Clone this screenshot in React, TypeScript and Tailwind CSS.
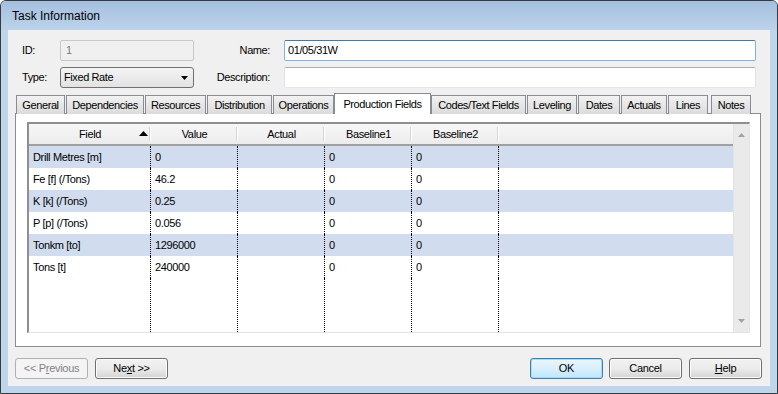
const ui = { fontFamily: '"Liberation Sans", Arial, sans-serif' };

const tabs = [
  { label: 'General', w: 'w-[49px]' },
  { label: 'Dependencies', w: 'w-[78px]' },
  { label: 'Resources', w: 'w-[61px]' },
  { label: 'Distribution', w: 'w-[65px]' },
  { label: 'Operations', w: 'w-[61px]' },
  { label: 'Production Fields', w: 'w-[97px]', active: true },
  { label: 'Codes/Text Fields', w: 'w-[95px]' },
  { label: 'Leveling', w: 'w-[50px]' },
  { label: 'Dates', w: 'w-[42px]' },
  { label: 'Actuals', w: 'w-[46px]' },
  { label: 'Lines', w: 'w-[40px]' },
  { label: 'Notes', w: 'w-[40px] ml-[2px]' },
];

const rows = [
  ['Drill Metres [m]', '0', '', '0', '0'],
  ['Fe [f] (/Tons)', '46.2', '', '0', '0'],
  ['K [k] (/Tons)', '0.25', '', '0', '0'],
  ['P [p] (/Tons)', '0.056', '', '0', '0'],
  ['Tonkm [to]', '1296000', '', '0', '0'],
  ['Tons [t]', '240000', '', '0', '0'],
];

// column widths: Field, Value, Actual, Baseline1, Baseline2
const cols = ['w-[122px]', 'w-[87px]', 'w-[87px]', 'w-[87px]', 'w-[87px]'];
const headers = ['Field', 'Value', 'Actual', 'Baseline1', 'Baseline2'];

function Button({
  children,
  disabled,
  primary,
}: {
  children: React.ReactNode;
  disabled?: boolean;
  primary?: boolean;
}) {
  if (disabled) {
    return (
      <div className="w-[73px] h-[21px] rounded-[3px] border border-[#adb2b5] bg-[#f4f4f4] flex items-center justify-center text-[11px] tracking-[-0.3px] text-[#838383]">
        {children}
      </div>
    );
  }
  return (
    <div
      className={
        'w-[73px] h-[21px] rounded-[3px] border flex items-center justify-center text-[11px] tracking-[-0.3px] text-black ' +
        (primary
          ? 'border-[#3c7fb1] bg-gradient-to-b from-[#eaf6fd] via-[#d9f0fc] to-[#bee6fd] shadow-[inset_0_0_0_1px_#a8dcf7]'
          : 'border-[#707070] bg-gradient-to-b from-[#f2f2f2] via-[#ebebeb] to-[#d4d4d4] shadow-[inset_0_0_0_1px_#fcfcfc]')
      }
    >
      {children}
    </div>
  );
}

export default function App() {
  return (
    <div style={ui} className="w-[778px] h-[394px] bg-white">
      <div className="w-[778px] h-[394px] flex flex-col border border-[#3a3a3a] rounded-t-[6px] bg-[#bfd5ec] overflow-hidden">
        {/* Title bar */}
        <div className="h-[29px] shrink-0 flex items-center pl-[11px] bg-gradient-to-b from-[#a4bfdf] to-[#bcd3eb] text-[12px] text-black">
          Task Information
        </div>

        {/* Client area */}
        <div className="mx-[7px] mb-[7px] flex-1 bg-[#f0f0f0] flex flex-col text-[11px] tracking-[-0.4px] text-black">
          {/* ID / Name */}
          <div className="flex items-center mt-[10px] h-[21px]">
            <div className="w-[52px] pl-[14px]">ID:</div>
            <div className="w-[134px] h-[21px] border border-[#c5c7cb] rounded-[2px] flex items-center pl-[5px] text-[#7a7a7a]">
              1
            </div>
            <div className="w-[76px] text-right">Name:</div>
            <div className="ml-[14px] w-[472px] h-[21px] border border-[#7eb4ea] border-t-[#3d7bad] rounded-[2px] bg-white flex items-center pl-[3px]">
              01/05/31W
            </div>
          </div>

          {/* Type / Description */}
          <div className="flex items-center mt-[6px] h-[21px]">
            <div className="w-[52px] pl-[14px]">Type:</div>
            <div className="w-[134px] h-[21px] border border-[#707070] rounded-[3px] bg-gradient-to-b from-[#f4f4f4] to-[#e2e2e2] flex items-center justify-between pl-[3px] pr-[5px]">
              <span>Fixed Rate</span>
              <svg width="7" height="4" viewBox="0 0 7 4">
                <path d="M0 0h7L3.5 4z" fill="#000" />
              </svg>
            </div>
            <div className="w-[76px] text-right">Description:</div>
            <div className="ml-[14px] w-[472px] h-[21px] border border-[#e2e3ea] border-t-[#abadb3] border-b-[#e3e9ef] rounded-[2px] bg-white" />
          </div>

          {/* Tabs */}
          <div className="mt-[5px] flex items-end h-[21px] pl-[8px] gap-[1px] relative z-10">
            {tabs.map((t) =>
              t.active ? (
                <div
                  key={t.label}
                  className={`${t.w} -mx-[1px] h-[21px] border border-b-0 border-[#898c95] bg-white flex items-start justify-center pt-[2px]`}
                >
                  {t.label}
                </div>
              ) : (
                <div
                  key={t.label}
                  className={`${t.w} h-[19px] border border-b-0 border-[#898c95] bg-gradient-to-b from-[#f2f2f2] to-[#dbdbdb] flex items-center justify-center`}
                >
                  {t.label}
                </div>
              )
            )}
          </div>

          {/* Tab panel */}
          <div className="ml-[7px] w-[746px] h-[234px] -mt-[1px] border border-[#898c95] bg-white pt-[8px] pl-[11px]">
            <div className="w-[723px] h-[211px] flex border-l-2 border-t-2 border-l-[#8f8f8f] border-t-[#8f8f8f] border-r border-b border-r-[#e3e3e3] border-b-[#e3e3e3] tracking-[-0.35px]">
              <div className="flex-1 flex flex-col">
                {/* Header */}
                <div className="h-[22px] flex bg-gradient-to-b from-[#f7f7f7] to-[#ececec] border-b-2 border-b-[#a0a0a0]">
                  {headers.map((h, i) => (
                    <div key={h} className={`${cols[i]} relative flex items-center justify-center`}>
                      <span>{h}</span>
                      {i === 0 && (
                        <svg className="absolute right-[3px] top-[7px]" width="9" height="5" viewBox="0 0 9 5">
                          <path d="M0 5h9L4.5 0z" fill="#000" />
                        </svg>
                      )}
                      <div className="absolute right-0 top-[3px] bottom-[3px] w-[2px] border-l border-l-[#d5d5d5] border-r border-r-white" />
                    </div>
                  ))}
                  <div className="flex-1" />
                </div>
                {/* Rows */}
                {rows.map((r, ri) => (
                  <div key={ri} className={`h-[22px] flex ${ri % 2 === 0 ? 'bg-[#d1dcef]' : 'bg-white'}`}>
                    {r.map((c, ci) => (
                      <div
                        key={ci}
                        className={`${cols[ci]} h-full flex items-center pl-[4px] border-r border-dotted border-black`}
                      >
                        {c}
                      </div>
                    ))}
                    <div className="flex-1" />
                  </div>
                ))}
                <div className="flex-1 flex">
                  {cols.map((w, i) => (
                    <div key={i} className={`${w} h-full border-r border-dotted border-black`} />
                  ))}
                  <div className="flex-1" />
                </div>
              </div>
              {/* Scrollbar */}
              <div className="w-[16px] bg-[#eaeaea] border-l border-l-[#e3e3e3] flex flex-col items-center justify-between py-[9px]">
                <svg width="7" height="4" viewBox="0 0 7 4">
                  <path d="M0 4h7L3.5 0z" fill="#a3a3a3" />
                </svg>
                <svg width="7" height="4" viewBox="0 0 7 4">
                  <path d="M0 0h7L3.5 4z" fill="#a3a3a3" />
                </svg>
              </div>
            </div>
          </div>

          {/* Buttons */}
          <div className="mt-[11px] flex items-center pl-[7px] pr-[8px]">
            <Button disabled>
              &lt;&lt; P<u>r</u>evious
            </Button>
            <div className="ml-[7px]">
              <Button>
                Ne<u>x</u>t &gt;&gt;
              </Button>
            </div>
            <div className="flex-1" />
            <Button primary>OK</Button>
            <div className="ml-[6px]">
              <Button>Cancel</Button>
            </div>
            <div className="ml-[7px]">
              <Button>
                <u>H</u>elp
              </Button>
            </div>
          </div>
        </div>
      </div>
    </div>
  );
}
